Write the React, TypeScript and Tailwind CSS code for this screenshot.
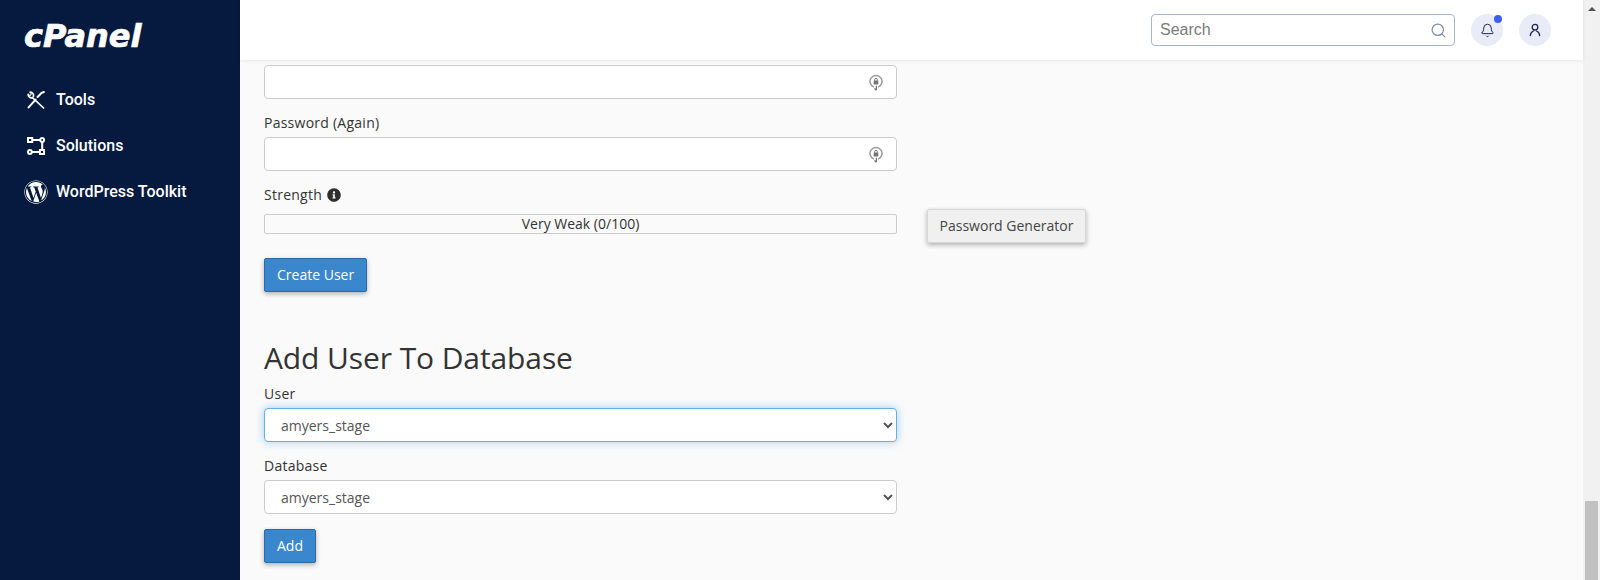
import React from "react";
import { Search, Bell } from "lucide-react";
import { FaWordpress, FaInfoCircle } from "react-icons/fa";

const font = { fontFamily: '"Open Sans", sans-serif' };

function ToolsIcon() {
  return (
    <svg width="18" height="18" viewBox="0 0 18 18" fill="none" stroke="white" strokeWidth="1.7" strokeLinecap="round" strokeLinejoin="round">
      <path d="M1.2 3.4a3.2 3.2 0 0 0 4.2 3.2L16.6 17" />
      <path d="M3.2 1.2a3.2 3.2 0 0 1 3.2 4.2" />
      <path d="M1.2 3.4L3 4.6 4.4 3 3.2 1.2" strokeWidth="1.1" />
      <path d="M16.8 1l-2.6 1.2-3.6 3.8" strokeWidth="2" />
      <path d="M8.6 8.6L1.6 16.4" strokeWidth="2" />
    </svg>
  );
}

function SolutionsIcon() {
  return (
    <svg width="18" height="18" viewBox="0 0 18 18" fill="none" stroke="white" strokeWidth="2">
      <rect x="1" y="1" width="4.2" height="4" />
      <path d="M5 3h8.4" />
      <circle cx="15.2" cy="3" r="1.9" />
      <path d="M15.2 4.8v8.4" />
      <rect x="12.9" y="13" width="4.2" height="4" />
      <path d="M13 15H4.8" />
      <circle cx="2.9" cy="15" r="1.9" />
    </svg>
  );
}

function PwIcon() {
  return (
    <svg width="14" height="17" viewBox="0 0 14 17" fill="none" className="shrink-0">
      <path d="M5 13.1A6 6 0 1 1 9 13.1" stroke="#9a9a9a" strokeWidth="1.5" />
      <rect x="4.7" y="6.6" width="4.6" height="3.8" rx="0.5" fill="#757575" />
      <path d="M5.7 6.8V5.7a1.3 1.3 0 0 1 2.6 0v1.1" stroke="#757575" strokeWidth="1" />
      <path d="M7.4 11.8v4.2M5.4 14.4l2 1.8" stroke="#757575" strokeWidth="1.3" />
    </svg>
  );
}

function UserIcon() {
  return (
    <svg width="14" height="14" viewBox="0 0 14 14" fill="none" stroke="#1e2a4a" strokeWidth="1.3" strokeLinecap="round">
      <circle cx="7" cy="4.2" r="2.8" />
      <path d="M2.3 12.6c.3-2.6 2-4.2 3.2-4.6M11.7 12.6c-.3-2.6-2-4.2-3.2-4.6" />
    </svg>
  );
}

function NavItem({ icon, label, pad }: { icon: React.ReactNode; label: string; pad: string }) {
  return (
    <a className="flex h-[46px] items-center text-white" style={{ fontFamily: "Roboto, sans-serif" }}>
      <span className={`flex w-[32px] items-center ${pad}`}>{icon}</span>
      <span className="text-base font-medium">{label}</span>
    </a>
  );
}

function Label({ children, className = "" }: { children: React.ReactNode; className?: string }) {
  return <label className={`block h-5 text-sm leading-5 font-medium tracking-[0.25px] text-[#333333] ${className}`}>{children}</label>;
}

function PasswordInput() {
  return (
    <div className="flex h-[34px] w-[633px] items-center justify-end rounded border border-[#cccccc] bg-white pr-[13px]">
      <PwIcon />
    </div>
  );
}

function Btn({ children, className = "" }: { children: React.ReactNode; className?: string }) {
  return (
    <button className={`block h-[34px] rounded-[2px] border border-[#2b6ca8] bg-[#3a87cd] px-3 text-sm text-white shadow-[0_2px_5px_rgba(0,0,0,0.3)] ${className}`}>
      {children}
    </button>
  );
}

function Sel({ focus }: { focus?: boolean }) {
  return (
    <select
      defaultValue="amyers_stage"
      className={`block h-[34px] w-[633px] rounded border bg-white pl-3 pr-1 text-sm text-[#555555] ${focus ? "border-[#66afe9] shadow-[0_0_8px_rgba(102,175,233,0.6)] outline-none" : "border-[#cccccc]"}`}
    >
      <option>amyers_stage</option>
    </select>
  );
}

export default function App() {
  return (
    <div className="flex h-[580px] w-[1600px] overflow-hidden bg-[#fafafa]" style={font}>
      <aside className="flex h-full w-[240px] shrink-0 flex-col bg-[#051a3e] pl-6">
        <div className="flex h-[76px] items-start pt-[16px]">
          <span className="text-[32px] leading-[40px] font-bold text-white italic [-webkit-text-stroke:0.7px_white]" style={{ fontFamily: '"DejaVu Sans", sans-serif' }}>
            cPanel
          </span>
        </div>
        <nav className="flex flex-col pt-[1px]">
          <NavItem icon={<ToolsIcon />} label="Tools" pad="pl-[3px]" />
          <NavItem icon={<SolutionsIcon />} label="Solutions" pad="pl-[3px]" />
          <NavItem icon={<FaWordpress size={24} color="white" />} label="WordPress Toolkit" pad="pl-0" />
        </nav>
      </aside>

      <div className="flex min-w-0 flex-1 flex-col">
        <header className="relative z-10 flex h-[60px] shrink-0 items-center justify-end bg-white pr-[32px] shadow-[0_1px_4px_rgba(0,0,0,0.08)]">
          <div className="flex h-8 w-[304px] items-center justify-between rounded border border-[#a9b5cb] pr-[7px] pl-2">
            <span className="text-base text-[#7b7b7b]" style={{ fontFamily: '"Liberation Sans", sans-serif' }}>Search</span>
            <Search size={17} color="#7f8ca6" strokeWidth={1.7} />
          </div>
          <div className="relative ml-4 flex h-8 w-8 items-center justify-center rounded-full bg-[#e9ebf8]">
            <Bell size={15} color="#1e2a4a" strokeWidth={1.6} />
            <span className="absolute top-[1px] right-[1px] h-2 w-2 rounded-full bg-[#3d5ff0]" />
          </div>
          <div className="ml-4 flex h-8 w-8 items-center justify-center rounded-full bg-[#e9ebf8]">
            <UserIcon />
          </div>
        </header>

        <main className="flex-1 pt-[5px] pl-6">
          <PasswordInput />
          <Label className="mt-[14px] mb-1">Password (Again)</Label>
          <PasswordInput />
          <div className="mt-[14px] flex h-5 items-center gap-[5px]">
            <Label>Strength</Label>
            <FaInfoCircle size={14} color="#2f2f2f" />
          </div>
          <div className="mt-1 flex h-[34px] items-center">
            <div className="mb-[4px] h-5 w-[633px] rounded-[2px] border border-[#cccccc] text-center text-sm leading-[18px] text-[#333333]">
              Very Weak (0/100)
            </div>
            <button className="ml-[30px] h-[34px] w-[159px] rounded-[2px] border border-[#d8d8d8] bg-[#f0f0f0] text-sm text-[#444444] shadow-[0_2px_5px_rgba(0,0,0,0.3)]">
              Password Generator
            </button>
          </div>
          <Btn className="mt-[15px]">Create User</Btn>
          <h2 className="mt-[49px] text-[30px] leading-[33px] font-normal tracking-[-0.1px] text-[#333333]">Add User To Database</h2>
          <Label className="mt-[10px] mb-1">User</Label>
          <Sel focus />
          <Label className="mt-[14px] mb-1">Database</Label>
          <Sel />
          <Btn className="mt-[15px]">Add</Btn>
        </main>
      </div>

      <div className="flex w-[17px] shrink-0 flex-col items-center justify-between bg-[#f1f1f1]">
        <div className="mt-[7px] h-0 w-0 border-x-[4px] border-b-[4px] border-x-transparent border-b-[#505050]" />
        <div className="h-[79px] w-[13px] bg-[#c1c1c1]" />
      </div>
    </div>
  );
}
